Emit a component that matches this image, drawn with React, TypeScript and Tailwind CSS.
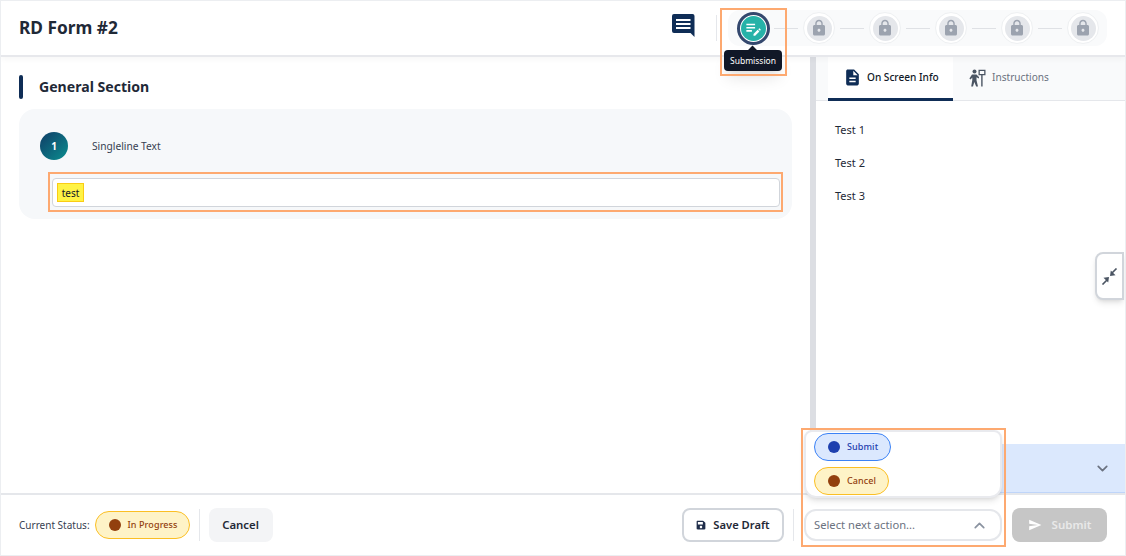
import { ChevronDown, ChevronUp } from "lucide-react";
import { FaSave } from "react-icons/fa";
import { MdDescription, MdEditNote, MdLock, MdSend } from "react-icons/md";

const lockedSteps = [1, 2, 3, 4, 5];
const infoRows = ["Test 1", "Test 2", "Test 3"];

function Highlight({ className }: { className: string }) {
  return <div className={`absolute z-30 border-2 border-[#fda970] pointer-events-none ${className}`} />;
}

function StatusPill({ label, tone, className }: { label: string; tone: "amber" | "blue"; className: string }) {
  const isBlue = tone === "blue";
  return (
    <div
      className={`flex items-center h-[28px] rounded-full border text-[9px] font-medium ${className} ${
        isBlue ? "bg-[#dbe8fe] border-[#3b82f6] text-[#1e40af]" : "bg-[#fef3c7] border-[#fbbf24] text-[#92400e]"
      }`}
    >
      <span className={`w-[12px] h-[12px] rounded-full shrink-0 ${isBlue ? "bg-[#1e40af]" : "bg-[#92400e]"}`} />
      <span className="ml-[7px] tracking-[0.1px]">{label}</span>
    </div>
  );
}

function ChatIcon() {
  return (
    <svg width="23" height="23" viewBox="0 0 23 23">
      <path fill="#0f2d56" d="M2 0H20.5a2 2 0 0 1 2 2V23L18.500 19H2a2 2 0 0 1-2-2V2a2 2 0 0 1 2-2Z" />
      <path fill="#fff" d="M4 5h14.500v2H4zM4 9h14.500v2H4zM4 13h14.500v2H4z" />
    </svg>
  );
}

function CollapseIcon() {
  return (
    <svg width="17" height="17" viewBox="0 0 17 17" fill="#4b5563" stroke="none">
      <path d="M9 8 L9.800 2.500 L14.500 7.200 Z" />
      <path d="M8 9 L7.200 14.500 L2.500 9.800 Z" />
      <path d="M11 5 L15.500 .5 M6 12 L1.500 16.500" stroke="#4b5563" strokeWidth="1.600" fill="none" />
    </svg>
  );
}

function InstructionsIcon() {
  return (
    <svg width="17" height="18" viewBox="0 0 17 18" fill="#4b5563">
      <circle cx="5.500" cy="2.600" r="2" />
      <path d="M3 5.500h4.500l2.500 2.500 0 1.500-2.500-1.200v3L9 17.500H7.200L5.300 13 4 17.500H2.200L3.300 11V8.500L1.600 10.500.4 9.500Z" />
      <path d="M9.500 .8h7v5.400h-2.900v11.300h-1.400V6.200H9.500Zm1.300 1.300v2.800h4.400V2.100Z" />
    </svg>
  );
}

export default function App() {
  return (
    <div
      className="relative w-[1126px] h-[556px] overflow-hidden bg-white flex flex-col text-[#1f2937] border-x border-[#eceef1]"
      style={{ fontFamily: '"Noto Sans", sans-serif' }}
    >
      {/* Header */}
      <header className="relative z-10 h-[57px] shrink-0 flex items-center pl-[18px] pr-[18px] border-t border-[#eceef1] border-b-2 border-b-[#e7e8ec] bg-white shadow-[0_2px_6px_rgba(0,0,0,0.04)]">
        <h1 className="text-[17.300px] font-bold text-[#1f2937] leading-none">RD Form #2</h1>
        <div className="ml-auto mr-[21px] -mt-[5px]">
          <ChatIcon />
        </div>
        <div className="w-px h-[26px] bg-[#e5e7eb] mr-[11px]" />
        <div className="w-[379px] h-[36px] rounded-xl bg-[#f9fafb] flex items-center pl-[9px]">
          <div className="w-[33px] h-[33px] rounded-full border-[3px] border-[#34486e] bg-white p-[1px] shrink-0">
            <div className="w-full h-full rounded-full bg-[#26b2a8] flex items-center justify-center text-white">
              <MdEditNote size={19} />
            </div>
          </div>
          {lockedSteps.map((step) => (
            <div key={step} className="flex items-center">
              <div className={`h-px w-[24px] bg-[#dfe1e5] ${step === 1 ? "ml-[4px]" : ""} mr-[5px]`} />
              <div className="w-[32px] h-[32px] rounded-full bg-white border border-[#eef0f2] flex items-center justify-center mr-[5px]">
                <div className="w-[25px] h-[25px] rounded-full bg-[#e5e7eb] flex items-center justify-center text-[#9ca3af]">
                  <MdLock size={18} />
                </div>
              </div>
            </div>
          ))}
        </div>
      </header>

      {/* Body */}
      <div className="flex-1 min-h-0 flex">
        <main className="w-[809px] shrink-0 pl-[18px] pr-[18px] pt-[18px]">
          <div className="flex items-center h-[24px]">
            <div className="w-[4px] h-[24px] rounded-sm bg-[#0f2d56]" />
            <h2 className="ml-[16px] text-[14.100px] font-bold text-[#1f2937]">General Section</h2>
          </div>
          <section className="mt-[10px] h-[110px] rounded-2xl bg-[#f6f8fa] pl-[21px] pr-[12px] pt-[23px]">
            <div className="flex items-center">
              <div className="w-[28px] h-[28px] rounded-full bg-gradient-to-br from-[#0f3d66] to-[#0a8f8f] text-white text-[10px] font-bold flex items-center justify-center">
                1
              </div>
              <span className="ml-[24px] pt-px text-[10.200px] text-[#374151]">Singleline Text</span>
            </div>
            <div className="mt-[18px] ml-[12px] h-[29px] rounded-[4px] border border-[#d1d5db] bg-white flex items-center pl-[4px]">
              <span className="h-[19px] w-[27px] bg-[#fff344] border border-[#facc15] text-[10px] leading-none text-[#111827] flex items-center justify-center">
                test
              </span>
            </div>
          </section>
        </main>

        <div className="w-[6px] shrink-0 bg-[#dcdee3]" />

        <aside className="flex-1 flex flex-col min-w-0">
          <div className="h-[44px] shrink-0 pl-[12px] bg-[#f9fafb] border-b border-[#e5e7eb] flex">
            <div className="w-[125px] h-[44px] bg-white border-b-[3px] border-[#0f2d56] flex items-center pl-[15px] text-[10.100px] font-medium text-[#111827]">
              <MdDescription size={19} className="text-[#0f2d56]" />
              <span className="ml-[5px]">On Screen Info</span>
            </div>
            <div className="flex items-center pl-[16px] pb-[2px] text-[10.100px] text-[#6b7280]">
              <InstructionsIcon />
              <span className="ml-[6px]">Instructions</span>
            </div>
          </div>
          <div className="flex-1 pl-[19px] pt-[20px] flex flex-col gap-[14.500px] text-[11px] text-[#1f2937]">
            {infoRows.map((row) => (
              <p key={row} className="leading-[18.500px]">
                {row}
              </p>
            ))}
          </div>
          <div className="h-[49px] shrink-0 bg-[#dbe8fd] border-b border-[#bfd5f9] flex items-center justify-end pr-[14px] text-[#6b7280]">
            <ChevronDown size={17} strokeWidth={2.400} />
          </div>
        </aside>
      </div>

      {/* Footer */}
      <footer className="h-[63px] shrink-0 border-t-2 border-[#e5e7eb] border-b border-b-[#eceef1] bg-white flex items-center pl-[18px] pr-[18px]">
        <span className="text-[10px] text-[#374151]">Current Status:</span>
        <StatusPill label="In Progress" tone="amber" className="ml-[5px] w-[95px] pl-[13px]" />
        <div className="w-px h-[32px] bg-[#e5e7eb] ml-[9px]" />
        <button className="ml-[9px] w-[64px] h-[34px] rounded-lg bg-[#f3f4f6] text-[11.400px] font-semibold text-[#1f2937]">
          Cancel
        </button>
        <button className="ml-auto w-[102px] h-[34px] rounded-lg border-2 border-[#d1d5db] bg-white flex items-center justify-center text-[11.200px] font-semibold text-[#1f2937]">
          <FaSave size={10} className="text-[#1f2d4a]" />
          <span className="ml-[7px]">Save Draft</span>
        </button>
        <div className="w-px h-[32px] bg-[#e5e7eb] ml-[9px]" />
        <div className="ml-[10px] w-[198px] h-[32px] rounded-xl border-2 border-[#e5e7eb] bg-white flex items-center justify-between pl-[8px] pr-[12px] text-[11.200px] text-[#6b7280]">
          <span>Select next action...</span>
          <ChevronUp size={17} strokeWidth={2.400} className="text-[#8b93a1]" />
        </div>
        <button className="ml-[10px] w-[95px] h-[34px] rounded-lg bg-[#c6c6c6] flex items-center justify-center text-[11.500px] font-semibold text-[#e9e9e9]">
          <MdSend size={14} className="text-white" />
          <span className="ml-[10px]">Submit</span>
        </button>
      </footer>

      {/* Floating pieces */}
      <div className="absolute left-[723px] top-[50px] z-20 h-[21px] w-[58px] rounded-[4px] bg-[#111827] shadow-lg text-[8.500px] text-white flex items-center justify-center pt-px">
        Submission
        <span className="absolute -top-[3px] left-[25px] w-[7px] h-[7px] rotate-45 bg-[#111827]" />
      </div>
      <div className="absolute left-[1094px] top-[252px] z-20 w-[29px] h-[48px] rounded-l-lg bg-white border-2 border-[#d1d5db] shadow-md flex items-center justify-center">
        <CollapseIcon />
      </div>
      <div className="absolute left-[803px] top-[430px] z-20 w-[198px] h-[68px] rounded-b-xl rounded-t-lg border-2 border-[#e9eaee] bg-white shadow-md flex flex-col gap-[6px] pl-[8px] pt-[1px]">
        <StatusPill label="Submit" tone="blue" className="w-[77px] pl-[13px]" />
        <StatusPill label="Cancel" tone="amber" className="w-[75px] pl-[13px]" />
      </div>

      {/* Orange review outlines */}
      <Highlight className="left-[719px] top-[8px] w-[67px] h-[68px]" />
      <Highlight className="left-[47px] top-[172px] w-[735px] h-[40px]" />
      <Highlight className="left-[800px] top-[428px] w-[205px] h-[119px]" />
    </div>
  );
}
